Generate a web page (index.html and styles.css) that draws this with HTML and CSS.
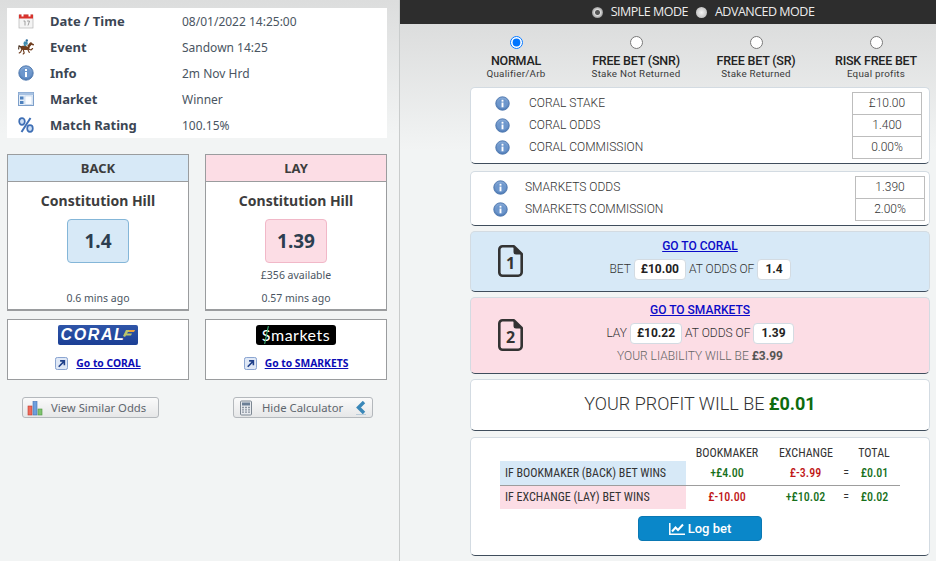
FILE: index.html
```html
<!DOCTYPE html>
<html lang="en">
<head>
<meta charset="utf-8">
<title>Matched betting calculator</title>
<link rel="stylesheet" href="styles.css">
</head>
<body>
<svg class="defs" width="0" height="0" aria-hidden="true">
  <defs>
    <radialGradient id="infoGrad" cx="50%" cy="35%" r="65%">
      <stop offset="0" stop-color="#a9c6ea"/>
      <stop offset="1" stop-color="#4a78b5"/>
    </radialGradient>
    <symbol id="info" viewBox="0 0 16 16">
      <circle cx="8" cy="8" r="7.2" fill="url(#infoGrad)" stroke="#4d77ad" stroke-width=".9"/>
      <circle cx="8" cy="8" r="5" fill="#6d97cd"/>
      <rect x="7" y="7" width="2" height="5" fill="#fff"/>
      <rect x="7" y="4" width="2" height="2" fill="#fff"/>
    </symbol>
    <symbol id="ext" viewBox="0 0 14 14">
      <rect x=".5" y=".5" width="13" height="13" rx="2" fill="#dfe8f6" stroke="#7d9bcb"/>
      <path d="M4 10.500 9.200 5.200M5.500 4.200h4.600v4.600" fill="none" stroke="#20408a" stroke-width="1.700"/>
    </symbol>
    <symbol id="doc" viewBox="0 0 25 32">
      <path d="M4.500 1.300h11.500l7.700 7.700v18.200a3.500 3.500 0 0 1-3.500 3.500H4.500A3.200 3.200 0 0 1 1.300 27.500V4.500a3.200 3.200 0 0 1 3.200-3.200Z" fill="none" stroke="#333" stroke-width="2.600" stroke-linejoin="round"/>
      <path d="M15.500 1.500v5.500a2.500 2.500 0 0 0 2.500 2.500h5.500Z" fill="#333"/>
    </symbol>
  </defs>
</svg>

<main class="page">
  <aside class="left">
    <section class="details">
      <div class="detail-row">
        <svg class="detail-icon" viewBox="0 0 16 16"><rect x="1" y="2" width="14" height="13" fill="#f4f4f4" stroke="#b5b5b5" stroke-width=".7"/><rect x="1" y="1.500" width="14" height="4" fill="#d8322c"/><rect x="3.500" y=".5" width="2" height="3" fill="#fff"/><rect x="10.500" y=".5" width="2" height="3" fill="#fff"/><path d="M5.500 8h1.500v4.500M9 8h2.500L10 12.500" fill="none" stroke="#8a8a8a" stroke-width=".8"/></svg>
        <span class="detail-label">Date / Time</span><span class="detail-value">08/01/2022 14:25:00</span>
      </div>
      <div class="detail-row">
        <svg class="detail-icon" viewBox="0 0 16 16"><g fill="none" stroke="#6f3d1e" stroke-linecap="round" stroke-linejoin="round"><ellipse cx="7" cy="8.800" rx="4.600" ry="2.300" fill="#6f3d1e" stroke="none"/><path d="M10 8 12.800 4.600" stroke-width="2.600"/><path d="M12.800 4.500 15.300 5.700" stroke-width="1.500"/><path d="M3 8 1 6.800.7 10" stroke-width="1.100" stroke="#3c2412"/><path d="M10.500 10 13 11l1.600-1.500M9.800 10.500l1.500 3M4 10 2.700 13 1.200 14M5.200 10.500l1 3.500-1 1" stroke-width="1.100"/></g><path d="M6 2.500h3l.8 1.500-.6 3-3 .2-.7-2.700Z" fill="#3d8bb0"/><circle cx="8.800" cy="1.500" r="1.200" fill="#2c6b9a"/><path d="M8 5.500 9.500 8" stroke="#e6d6bb" stroke-width="1"/></svg>
        <span class="detail-label">Event</span><span class="detail-value">Sandown 14:25</span>
      </div>
      <div class="detail-row">
        <svg class="detail-icon"><use href="#info"/></svg>
        <span class="detail-label">Info</span><span class="detail-value">2m Nov Hrd</span>
      </div>
      <div class="detail-row">
        <svg class="detail-icon" viewBox="0 0 16 16"><rect x=".5" y="1.500" width="15" height="13" fill="#e3edf8" stroke="#7d9fca"/><rect x=".5" y="1.500" width="15" height="2.500" fill="#a8c2e2"/><rect x="2" y="5.500" width="3.500" height="3" fill="#4f81bd"/><rect x="2" y="10" width="3.500" height="3" fill="#4f81bd"/><rect x="7" y="5" width="7" height="8.500" fill="#fafcff" stroke="#b7cbe4" stroke-width=".6"/></svg>
        <span class="detail-label">Market</span><span class="detail-value">Winner</span>
      </div>
      <div class="detail-row">
        <svg class="detail-icon" viewBox="0 0 16 16"><g fill="#cfe0f5" stroke="#3f6fb5" stroke-width="1.700"><ellipse cx="4" cy="4.500" rx="2.800" ry="3.300"/><ellipse cx="12" cy="11.500" rx="2.800" ry="3.300"/><path d="M12.500 1 3.500 15" fill="none" stroke-width="2"/></g></svg>
        <span class="detail-label">Match Rating</span><span class="detail-value">100.15%</span>
      </div>
    </section>

    <section class="odds-grid">
      <article class="odds-card">
        <h2 class="odds-head odds-head-back">BACK</h2>
        <h3 class="runner">Constitution Hill</h3>
        <div class="price price-back">1.4</div>
        <p class="avail"></p>
        <p class="ago">0.6 mins ago</p>
      </article>
      <article class="odds-card">
        <h2 class="odds-head odds-head-lay">LAY</h2>
        <h3 class="runner">Constitution Hill</h3>
        <div class="price price-lay">1.39</div>
        <p class="avail">£356 available</p>
        <p class="ago">0.57 mins ago</p>
      </article>

      <div class="book-card">
        <div class="logo logo-coral"><span class="coral-word">CORAL</span><svg class="coral-flag" viewBox="0 0 12 9"><path d="M0 7 3 1h9L10 3H5L4 4.500h5L8 6.500H3L2 8Z" fill="#b9c46a"/><path d="M6 1h6l-1 2H6Z" fill="#e9a13b"/></svg></div>
        <div class="go"><svg class="ext-icon"><use href="#ext"/></svg><a href="#" class="go-link">Go to CORAL</a></div>
      </div>
      <div class="book-card">
        <div class="logo logo-smarkets"><span class="s-dollar">S</span>markets</div>
        <div class="go"><svg class="ext-icon"><use href="#ext"/></svg><a href="#" class="go-link">Go to SMARKETS</a></div>
      </div>

      <div class="btn-cell btn-cell-a">
        <button class="tool-btn">
          <svg class="btn-icon" viewBox="0 0 16 16"><rect x="1" y="6" width="4" height="9" fill="#ee6a5c" stroke="#c0392b" stroke-width=".6"/><rect x="6" y="1.500" width="4" height="13.500" fill="#6e9fdc" stroke="#3f70b5" stroke-width=".6"/><rect x="11" y="9" width="4" height="6" fill="#7fc36e" stroke="#4d9440" stroke-width=".6"/></svg>
          View Similar Odds
        </button>
      </div>
      <div class="btn-cell btn-cell-b">
        <button class="tool-btn">
          <svg class="btn-icon" viewBox="0 0 16 16"><rect x="2.500" y="1" width="11" height="14" rx="1" fill="#e8ebef" stroke="#7d8792"/><rect x="4" y="2.500" width="8" height="3" fill="#6b7f96"/><path d="M4 7.500h2M7 7.500h2M10 7.500h2M4 9.800h2M7 9.800h2M10 9.800h2M4 12.200h2M7 12.200h2M10 12.200h2" stroke="#8a94a0" stroke-width="1.300"/></svg>
          Hide Calculator
          <svg class="chev" viewBox="0 0 12 14"><path d="M9 1 3.500 6.500 9 12" fill="none" stroke="#3a87b8" stroke-width="3.400"/><path d="M1 13.500h10" stroke="#b9cbd8" stroke-width="1"/></svg>
        </button>
      </div>
    </section>
  </aside>

  <div class="right">
    <header class="mode-bar">
      <span class="mode"><span class="mode-dot mode-dot-on"></span>SIMPLE MODE</span>
      <span class="mode"><span class="mode-dot"></span>ADVANCED MODE</span>
    </header>

    <div class="bet-types">
      <label class="bet-type"><input class="bet-radio" type="radio" name="t" checked><b>NORMAL</b><small>Qualifier/Arb</small></label>
      <label class="bet-type"><input class="bet-radio" type="radio" name="t"><b>FREE BET (SNR)</b><small>Stake Not Returned</small></label>
      <label class="bet-type"><input class="bet-radio" type="radio" name="t"><b>FREE BET (SR)</b><small>Stake Returned</small></label>
      <label class="bet-type"><input class="bet-radio" type="radio" name="t"><b>RISK FREE BET</b><small>Equal profits</small></label>
    </div>

    <div class="stack">
      <section class="panel inputs inputs-a">
        <div class="input-row"><svg class="i-icon"><use href="#info"/></svg><span class="input-label">CORAL STAKE</span><span class="input-box">£10.00</span></div>
        <div class="input-row"><svg class="i-icon"><use href="#info"/></svg><span class="input-label">CORAL ODDS</span><span class="input-box">1.400</span></div>
        <div class="input-row"><svg class="i-icon"><use href="#info"/></svg><span class="input-label">CORAL COMMISSION</span><span class="input-box">0.00%</span></div>
      </section>
      <section class="panel inputs inputs-b">
        <div class="input-row"><svg class="i-icon"><use href="#info"/></svg><span class="input-label">SMARKETS ODDS</span><span class="input-box">1.390</span></div>
        <div class="input-row"><svg class="i-icon"><use href="#info"/></svg><span class="input-label">SMARKETS COMMISSION</span><span class="input-box">2.00%</span></div>
      </section>

      <section class="panel step step-back">
        <div class="step-doc"><svg class="doc-icon"><use href="#doc"/></svg><span class="doc-num">1</span></div>
        <div class="step-body">
          <a href="#" class="step-link">GO TO CORAL</a>
          <div class="step-line">BET <span class="chip">£10.00</span> AT ODDS OF <span class="chip">1.4</span></div>
        </div>
      </section>
      <section class="panel step step-lay">
        <div class="step-doc"><svg class="doc-icon"><use href="#doc"/></svg><span class="doc-num">2</span></div>
        <div class="step-body">
          <a href="#" class="step-link">GO TO SMARKETS</a>
          <div class="step-line">LAY <span class="chip">£10.22</span> AT ODDS OF <span class="chip">1.39</span></div>
          <div class="liability">YOUR LIABILITY WILL BE <b>£3.99</b></div>
        </div>
      </section>

      <section class="panel profit">YOUR PROFIT WILL BE <b class="pos">£0.01</b></section>

      <section class="panel results">
        <table class="res-table">
          <thead>
            <tr><th class="c-label"></th><th class="c-book">BOOKMAKER</th><th class="c-exch">EXCHANGE</th><th class="c-eq"></th><th class="c-total">TOTAL</th></tr>
          </thead>
          <tbody>
            <tr class="row-first"><td class="c-label tint-back">IF BOOKMAKER (BACK) BET WINS</td><td class="num pos">+£4.00</td><td class="num neg c-exch">£-3.99</td><td class="eq">=</td><td class="num pos c-total">£0.01</td></tr>
            <tr><td class="c-label tint-lay">IF EXCHANGE (LAY) BET WINS</td><td class="num neg">£-10.00</td><td class="num pos c-exch">+£10.02</td><td class="eq">=</td><td class="num pos c-total">£0.02</td></tr>
          </tbody>
        </table>
        <button class="log-btn"><svg class="log-icon" viewBox="0 0 16 12"><path d="M.8 0v11.200H16" fill="none" stroke="#fff" stroke-width="1.500"/><path d="M3 8.500l3.500-4 2.500 2.500L14 1.500" fill="none" stroke="#fff" stroke-width="2"/></svg>Log bet</button>
      </section>
    </div>
  </div>
</main>
</body>
</html>
```

FILE: styles.css
```css
* { box-sizing: border-box; }
html, body { margin: 0; padding: 0; height: 100%; }
body { overflow: hidden; background: #f2f4f4; }
.defs { position: absolute; }
.page { display: flex; width: 936px; height: 561px; }

/* left column */
.left {
  width: 400px;
  flex: none;
  padding: 8px 12px 0 7px;
  border-right: 1px solid #c9cccc;
  background: linear-gradient(#dcdddd 0, #f2f4f4 135px);
}
.details { background: #fff; height: 130px; width: 380px; }
.detail-row { display: flex; align-items: center; height: 26px; }
.detail-icon { width: 16px; height: 16px; margin-left: 11px; flex: none; }
.detail-label { width: 132px; margin-left: 16px; font: bold 13px "Noto Sans", sans-serif; color: #3b4654; }
.detail-value { font: 12px "Noto Sans", sans-serif; color: #4a5562; }

.odds-grid { display: grid; grid-template-columns: 182px 182px; column-gap: 16px; margin-top: 16px; width: 380px; }
.odds-card { height: 157px; border: 1px solid #9a9c9e; border-bottom-width: 2px; background: #fff; text-align: center; }
.odds-head { margin: 0; height: 27px; font: bold 13px/26px "Noto Sans", sans-serif; color: #3d3d3d; border-bottom: 1px solid #9a9c9e; }
.odds-head-back { background: #d7e9f7; }
.odds-head-lay { background: #fcdde5; }
.runner { margin: 8px 0 0; font: bold 14px/21px "Noto Sans", sans-serif; color: #3d3d3d; }
.price { width: 62px; height: 44px; margin: 8px auto 0; border-radius: 4px; font: bold 19px/42px "Noto Sans", sans-serif; color: #2c3e50; }
.price-back { background: #d7e9f7; border: 1px solid #84b6d8; }
.price-lay { background: #fcdde5; border: 1px solid #f1b8c8; }
.avail { margin: 4px 0 0; height: 16px; font: 10.500px/16px "Noto Sans", sans-serif; color: #4a5562; }
.ago { margin: 7px 0 0; font: 10.500px/16px "Noto Sans", sans-serif; color: #4a5562; }

.book-card { height: 61px; margin-top: 8px; border: 1px solid #9a9c9e; background: #fff; display: flex; flex-direction: column; align-items: center; padding-top: 5px; }
.logo { width: 80px; height: 20px; border-radius: 2px; display: flex; align-items: center; justify-content: center; }
.logo-coral { background: linear-gradient(#2f55a8, #1b3f95); }
.coral-word { font: italic bold 16px/20px "Liberation Sans", sans-serif; letter-spacing: 1.600px; color: #fff; }
.coral-flag { width: 12px; height: 9px; margin: 0 0 3px -2px; }
.logo-smarkets { background: #000; color: #fff; font: 16px/20px Lato, sans-serif; border-radius: 3px; letter-spacing: .5px; }
.s-dollar { position: relative; }
.s-dollar::after { content: ""; position: absolute; left: 4px; top: 1px; width: 1px; height: 18px; background: #3fc380; transform: rotate(12deg); }
.go { display: flex; align-items: center; gap: 8px; margin-top: 11px; }
.ext-icon { width: 13px; height: 13px; }
.go-link { font: bold 10.300px/14px "Noto Sans", sans-serif; color: #0b0bb5; text-decoration: underline; }

.btn-cell { margin-top: 17px; display: flex; height: 21px; }
.btn-cell-a { padding-left: 15px; }
.btn-cell-b { padding-left: 28px; }
.tool-btn { height: 21px; padding: 0 12px 0 4px; display: flex; align-items: center; gap: 8px; border: 1px solid #b4b8bc; border-radius: 3px; background: linear-gradient(#fafafa, #e6e7e8); font: 11.300px "Noto Sans", sans-serif; color: #5f666e; white-space: nowrap; }
.btn-cell-b .tool-btn { padding-right: 5px; }
.btn-icon { width: 16px; height: 16px; flex: none; }
.chev { width: 12px; height: 14px; margin-left: 4px; }

/* right column */
.right { flex: 1; min-width: 0; background: linear-gradient(#dcdddd 24px, #f2f4f4 150px); font-family: Roboto, sans-serif; }
.mode-bar { height: 24px; background: #2d2d2d; display: flex; justify-content: center; align-items: center; gap: 8px; color: #ececec; font: 12.500px/24px "Open Sans", sans-serif; letter-spacing: -.5px; padding-left: 70px; }
.mode { display: flex; align-items: center; gap: 8px; }
.mode-dot { width: 11px; height: 11px; border-radius: 50%; background: radial-gradient(#f4f4f4, #b0b0b0); }
.mode-dot-on { background: radial-gradient(#555 0 2px, #ddd 3px, #999 5.500px); }

.bet-types { display: grid; grid-template-columns: repeat(4, 120px); padding: 12px 0 0 56px; height: 63px; }
.bet-type { display: flex; flex-direction: column; align-items: center; color: #222; }
.bet-radio { margin: 0; width: 13px; height: 13px; accent-color: #0075ff; }
.bet-type b { font: 500 12.500px/15px Roboto, sans-serif; letter-spacing: -.2px; margin-top: 4px; white-space: nowrap; }
.bet-type small { font: 9.800px/12px Roboto, sans-serif; color: #3a3a3a; letter-spacing: .25px; white-space: nowrap; }

.stack { width: 460px; margin-left: 70px; display: flex; flex-direction: column; gap: 5px; }
.panel { background: #fff; border: 1px solid #d3dbe2; border-bottom: 1px solid #3f4d5c; border-radius: 5px; }

.inputs { padding-top: 4px; }
.inputs-a { height: 77px; margin-bottom: 2px; }
.inputs-b { height: 55px; }
.input-row { display: flex; align-items: center; height: 22px; font: 300 12px/22px Roboto, sans-serif; }
.inputs-a .i-icon { margin-left: 24px; }
.inputs-a .input-label { margin-left: 19px; }
.inputs-a .input-box { margin-right: 7px; }
.inputs-b .i-icon { margin-left: 22px; }
.inputs-b .input-label { margin-left: 17px; }
.inputs-b .input-box { margin-right: 4px; }
.i-icon { width: 15px; height: 15px; flex: none; }
.input-label { flex: 1; color: #333; }
.input-box { width: 70px; height: 23px; border: 1px solid #bdbdbd; margin-bottom: -1px; text-align: center; line-height: 21px; color: #333; }

.step { display: flex; text-align: center; color: #555; font: 300 12px/18px Roboto, sans-serif; position: relative; }
.step-back { background: #d7e9f7; height: 61px; padding-top: 6px; }
.step-lay { background: #fcdde5; height: 77px; padding-top: 4px; }
.step-doc { position: absolute; left: 27px; top: 13px; width: 25px; height: 32px; }
.step-lay .step-doc { top: 21px; }
.doc-icon { width: 25px; height: 32px; display: block; }
.doc-num { position: absolute; left: 0; right: 0; top: 7px; font: bold 16px/22px "Open Sans", sans-serif; color: #333; }
.step-body { flex: 1; }
.step-link { display: block; font: 500 12px/16px Roboto, sans-serif; color: #0b0bc8; text-decoration: underline; }
.step-line { margin-top: 5px; height: 23px; line-height: 21px; display: flex; justify-content: center; gap: 3px; color: #333; font-size: 12px; }
.chip { display: inline-block; background: #fff; border: 1px solid #d3dbe2; border-radius: 4px; padding: 0 7px; height: 21px; line-height: 19px; font-weight: 700; font-size: 12px; color: #222; }
.chip:first-of-type { padding: 0 6px; }
.liability { line-height: 16px; margin-top: 2px; color: #666; }
.liability b { font-weight: 700; color: #555; }

.profit { height: 52px; margin-bottom: 1px; text-align: center; font: 300 18px/48px Roboto, sans-serif; color: #333; }
.profit .pos { font-weight: 700; color: #0d6b0d; }
.pos { color: #17701b; }
.neg { color: #c01717; }

.results { height: 119px; padding: 8px 0 0 29px; display: flex; flex-direction: column; align-items: flex-start; }
.res-table { width: 400px; border-collapse: collapse; table-layout: fixed; font: 12px/18px "Roboto Condensed", Roboto, sans-serif; color: #333; }
.res-table th { font-weight: 400; height: 15px; line-height: 15px; padding: 0; }
th.c-label { width: 186px; }
th.c-book { width: 82px; }
th.c-exch { width: 70px; }
th.c-eq { width: 16px; }
th.c-total { width: 46px; }
.res-table .c-exch { padding-left: 6px; }
.res-table .c-total { padding-right: 6px; }
.res-table td { padding-top: 0; padding-bottom: 0; height: 24px; text-align: center; }
.res-table td.c-label { text-align: left; padding-left: 5px; }
.row-first td { border-bottom: 1px solid #9d9d9d; }
.num { font-weight: 500; }
.eq { font-weight: 400; }
.tint-back { background: #d7e9f7; }
.tint-lay { background: #fcdde5; }
.log-btn { margin: 7px 0 0 138px; width: 124px; height: 25px; display: flex; justify-content: center; align-items: center; gap: 3px; background: #0a87c9; border: 1px solid #0a78b3; border-radius: 4px; color: #fff; font: 500 13px Roboto, sans-serif; }
.log-icon { width: 16px; height: 12px; }
```
